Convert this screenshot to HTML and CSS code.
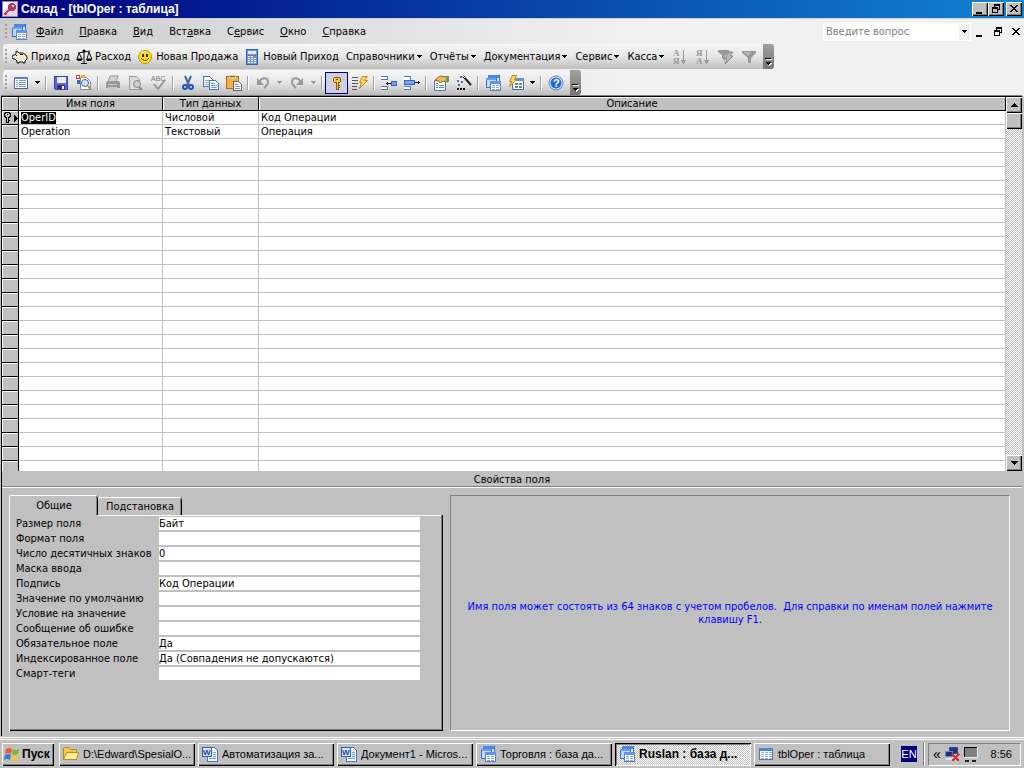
FILE: index.html
```html
<!DOCTYPE html>
<html lang="ru">

<head>
  <meta charset="UTF-8">
  <meta name="viewport" content="width=device-width, initial-scale=1.0">
  <title>Склад - [tblOper : таблица]</title>
  <link rel="stylesheet" href="styles.css">
</head>

<body>
  <!-- icons used more than once -->
  <svg class="sprite" aria-hidden="true">
    <symbol id="caret" viewBox="0 0 5 3"><path d="M0 0h5v1H4v1H3v1H2V2H1V1H0z" /></symbol>
    <symbol id="minimize" viewBox="0 0 10 10"><path d="M1 8h6v2H1z" /></symbol>
    <symbol id="restore" viewBox="0 0 10 10"><path d="M3 0h6v6H7V5h1V2H4v1H3zM1 3h6v6H1zM2 5v3h4V5z" fill-rule="evenodd" /></symbol>
    <symbol id="close" viewBox="0 0 10 10"><path d="M1 1h2v1h1v1h2V2h1V1h2v1H8v1H7v1H6v1h1v1h1v1h1v1H7V7H6V6H4v1H3v1H1V7h1V6h1V5h1V4H3V3H2V2H1z" /></symbol>
    <symbol id="more" viewBox="0 0 7 8">
      <path d="M1 1h6v1H1zM2 5h5v1H6v1H5v1H4V7H3V6H2z" fill="#fff" />
      <path d="M0 0h6v1H0zM1 4h5v1H5v1H4v1H3V6H2V5H1z" fill="#000" />
    </symbol>
    <symbol id="windows" viewBox="0 0 16 16">
      <path d="M3 0h11v10H3z" fill="#dce9fb" stroke="#3a6ccc" /><path d="M3 0h11v3H3z" fill="#4b86e8" />
      <path d="M1 3h10v9H1z" fill="#c5d9f7" stroke="#3a6ccc" /><path d="M1 3h10v2H1z" fill="#6a9df0" />
      <path d="M5.500 6.500h10v9h-10z" fill="#fff" stroke="#5b7fc0" /><path d="M5 6h11v3H5z" fill="#5f93ea" />
      <path d="M7 10h3v1H7zm4 0h3v1h-3zM7 12h3v1H7zm4 0h3v1h-3zM7 14h3v1H7zm4 0h3v1h-3z" fill="#86a7dd" />
    </symbol>
    <symbol id="word" viewBox="0 0 16 16">
      <path d="M5.500 1.500h7l3 3v11h-10z" fill="#f4f8ff" stroke="#4a74bd" />
      <path d="M11 6h3v1h-3zm0 2h3v1h-3zm0 2h3v1h-3zm-4 2h7v1H7z" fill="#7499d8" />
      <path d="M0 1h10v10H0z" fill="#2c5fba" /><path d="M1 2h8v8H1z" fill="#d9e6fb" />
      <text x="1" y="9" font-family="Liberation Sans" font-size="8" font-weight="bold" fill="#14459f">W</text>
    </symbol>
    <symbol id="datasheet" viewBox="0 0 16 16">
      <path d="M1.500 2.500h13v11h-13z" fill="#fff" stroke="#5675b0" /><path d="M1 2h14v3H1z" fill="#4c83de" />
      <path d="M3 6h3v1H3zm4 0h3v1H7zm4 0h3v1h-3zM3 8h3v1H3zm4 0h3v1H7zm4 0h3v1h-3zM3 10h3v1H3zm4 0h3v1H7zm4 0h3v1h-3zM3 12h3v1H3zm4 0h3v1H7zm4 0h3v1h-3z" fill="#8fb2e8" />
    </symbol>
  </svg>

  <header class="title-bar">
    <svg class="icon" viewBox="0 0 16 16"><path d="M.5.5h15v15H.5z" fill="#fff" stroke="#9b8aa0" /><path d="M1 11l10-10h4v14H1z" fill="#ead6e0" /><path d="M7 7L2 12v2h2l1-1 1-2 3-2z" fill="#b54867" /><circle cx="10" cy="6" r="4" fill="#b13c60" /><circle cx="11" cy="5" r="1" fill="#f6dbe5" /></svg>
    <h1>Склад - [tblOper : таблица]</h1>
    <div class="window-buttons">
      <button aria-label="Свернуть"><svg><use href="#minimize" /></svg></button>
      <button aria-label="Восстановить"><svg><use href="#restore" /></svg></button>
      <button class="close" aria-label="Закрыть"><svg><use href="#close" /></svg></button>
    </div>
  </header>

  <div class="bars">
    <nav class="menu-bar">
      <span class="grip"></span>
      <svg class="icon"><use href="#windows" /></svg>
      <button><u>Ф</u>айл</button>
      <button><u>П</u>равка</button>
      <button><u>В</u>ид</button>
      <button>Вст<u>а</u>вка</button>
      <button>С<u>е</u>рвис</button>
      <button><u>О</u>кно</button>
      <button><u>С</u>правка</button>
      <div class="ask">
        <input type="text" placeholder="Введите вопрос" aria-label="Введите вопрос">
        <button aria-label="Список вопросов"><svg class="caret"><use href="#caret" /></svg></button>
      </div>
      <div class="child-buttons">
        <button aria-label="Свернуть окно"><svg><use href="#minimize" /></svg></button>
        <button aria-label="Восстановить окно"><svg><use href="#restore" /></svg></button>
        <button aria-label="Закрыть окно"><svg><use href="#close" /></svg></button>
      </div>
    </nav>

    <div class="toolbar commands">
      <span class="grip"></span>
      <button>
        <svg class="icon smooth" viewBox="0 0 16 16"><path d="M1 6h2l1-1V2l2 1 1 1h4l3 2 1 2v2l-2 2v2h-2v-1H7v1H5v-2L3 10H1L0 8z" fill="#f4ead0" stroke="#111" /><path d="M4 6h1v1H4zM8 5h3v1H8z" fill="#111" /></svg>Приход</button>
      <button>
        <svg class="icon smooth" viewBox="0 0 16 16"><path d="M8 1v13M5 14.500h6M2 4l6-1 6-1M3 4L1 10h5L3 4M13 3l-2 7h5L13 3" fill="none" stroke="#111" /><path d="M0 10h7l-2 2H2zM10 10h6l-1 2h-4z" fill="#111" /><circle cx="8" cy="2" r="1.500" /></svg>Расход</button>
      <button>
        <svg class="icon smooth" viewBox="0 0 16 16"><circle cx="8" cy="8" r="6.500" fill="#ffdf18" stroke="#c59200" /><path d="M5 5h2v3H5zM9 5h2v3H9z" fill="#3b2c00" /><path d="M4 9q4 5 8 0" fill="none" stroke="#5b4300" /><path d="M4 4q2-2 5-1" stroke="#fffbd0" fill="none" /></svg>Новая Продажа</button>
      <button>
        <svg class="icon" viewBox="0 0 16 16"><path d="M2.500.5h11v15h-11z" fill="#6c98df" stroke="#3560aa" /><path d="M4 2h8v3H4z" fill="#d8f0fa" /><path d="M4 6h2v2H4zm3 0h2v2H7zM4 9h2v1H4zm3 0h2v1H7zM4 11h2v1H4zm3 0h2v1H7zm-3 2h2v1H4zm3 0h2v1H7zm3-4h2v1h-2zm0 2h2v1h-2zm0 2h2v1h-2z" fill="#fff" /><path d="M4 6h2v1H4zm3 0h2v1H7zm3 0h2v1h-2z" fill="#e33b35" /></svg>Новый Приход</button>
      <button class="drop">Справочники<svg class="caret"><use href="#caret" /></svg></button>
      <button class="drop">Отчёты<svg class="caret"><use href="#caret" /></svg></button>
      <button class="drop">Документация<svg class="caret"><use href="#caret" /></svg></button>
      <button class="drop">Сервис<svg class="caret"><use href="#caret" /></svg></button>
      <button class="drop">Касса<svg class="caret"><use href="#caret" /></svg></button>
      <button class="tool" disabled aria-label="Сортировка по возрастанию"><svg class="icon" viewBox="0 0 16 16"><text class="letter" x="1" y="7">А</text><text class="letter" x="1" y="15">Я</text><path d="M11 1h1v10h2l-2 4h-1l-2-4h2z" fill="#999" /></svg></button>
      <button class="tool" disabled aria-label="Сортировка по убыванию"><svg class="icon" viewBox="0 0 16 16"><text class="letter" x="1" y="7">Я</text><text class="letter" x="1" y="15">А</text><path d="M11 1h1v10h2l-2 4h-1l-2-4h2z" fill="#999" /></svg></button>
      <button class="tool" disabled aria-label="Фильтр по выделенному"><svg class="icon smooth" viewBox="0 0 16 16"><path d="M0 1h11v2L7 7v5l-3-3V6L0 3z" fill="#999" /><path d="M11 3h4l-3 4h3l-8 8 2-5H7z" fill="#bbb" stroke="#888" /></svg></button>
      <button class="tool" disabled aria-label="Применить фильтр"><svg class="icon smooth" viewBox="0 0 16 16"><path d="M1 2h14v2l-5 5v5H7V9L1 4z" fill="#999" /><path d="M3 3h7L7 7z" fill="#bbb" /></svg></button>
      <button class="more" aria-label="Параметры панелей"><svg><use href="#more" /></svg></button>
    </div>

    <div class="toolbar">
      <span class="grip"></span>
      <button class="tool" aria-label="Вид"><svg class="icon" viewBox="0 0 16 16"><path d="M1.500 2.500h13v11h-13z" fill="#fff" stroke="#4a6696" /><path d="M1 2h14v2H1z" fill="#5b82c4" /><path d="M3 5h2v1H3zm0 2h2v1H3zm0 2h2v1H3zm0 2h2v1H3zm3-6h7v1H6zm0 2h7v1H6zm0 2h7v1H6zm0 2h7v1H6z" fill="#7d9bc9" /></svg></button>
      <button class="tool-drop" aria-label="Список видов"><svg class="caret"><use href="#caret" /></svg></button>
      <span class="separator"></span>
      <button class="tool" aria-label="Сохранить"><svg class="icon" viewBox="0 0 16 16"><path d="M1.500 1.500h13v13h-12l-1-1z" fill="#6468d4" stroke="#3a3ea8" /><path d="M4 2h9v6H4z" fill="#e8edfb" /><path d="M4 10h8v4H4z" fill="#2d3284" /><path d="M9 11h2v3H9z" fill="#fff" /></svg></button>
      <button class="tool" aria-label="Поиск файлов"><svg class="icon smooth" viewBox="0 0 16 16"><path d="M4.500 2.500h6l4 4v8h-10z" fill="#fff" stroke="#6f8db9" /><path d="M0 0h4v4H0z" fill="#d93a27" /><path d="M1 1h2v2H1z" fill="#fff" /><path d="M5 0h4v3H5z" fill="#f0ae25" /><path d="M1 5h3v4H1z" fill="#3a68c9" /><circle cx="9" cy="8" r="3.500" fill="#c5e6fb" stroke="#5a6575" /><path d="M12 11l3 4" stroke="#c68734" stroke-width="2" /></svg></button>
      <span class="separator"></span>
      <button class="tool" disabled aria-label="Печать"><svg class="icon smooth" viewBox="0 0 16 16"><path d="M5 1h8l-2 6H3z" fill="#d5d5d5" stroke="#999" /><path d="M2 6h12l1 2v5H1V8z" fill="#999" /><path d="M3 9h9v1H3zM3 12h9v3H3z" fill="#c8c8c8" /></svg></button>
      <button class="tool" disabled aria-label="Предварительный просмотр"><svg class="icon smooth" viewBox="0 0 16 16"><path d="M1.500 1.500h7l3 3v10h-10z" fill="#ddd" stroke="#999" /><circle cx="9" cy="9" r="3.500" fill="#ccc" stroke="#888" /><path d="M11 12l3 3" stroke="#888" stroke-width="2" /></svg></button>
      <button class="tool" disabled aria-label="Орфография"><svg class="icon smooth" viewBox="0 0 16 16"><text x="0" y="6" font-family="Liberation Sans" font-size="7" fill="#777">ABC</text><path d="M3 9l4 5 7-9" fill="none" stroke="#999" stroke-width="2" /></svg></button>
      <span class="separator"></span>
      <button class="tool" aria-label="Вырезать"><svg class="icon smooth" viewBox="0 0 16 16"><path d="M5 1l4 9M11 1L7 10" stroke="#4b6490" stroke-width="2" /><circle cx="5" cy="12" r="2" fill="none" stroke="#2453b4" stroke-width="2" /><circle cx="11" cy="12" r="2" fill="none" stroke="#2453b4" stroke-width="2" /></svg></button>
      <button class="tool" aria-label="Копировать"><svg class="icon" viewBox="0 0 16 16"><path d="M.5 1.500h6l3 3v7h-9z" fill="#fff" stroke="#4372c7" /><path d="M2 5h5v1H2zm0 2h5v1H2zm0 2h5v1H2z" fill="#86aae6" /><path d="M6.500 5.500h6l3 3v6h-9z" fill="#fff" stroke="#4372c7" /><path d="M8 8h4v1H8zm0 2h6v1H8zm0 2h6v1H8z" fill="#6f98dc" /></svg></button>
      <button class="tool" aria-label="Вставить"><svg class="icon" viewBox="0 0 16 16"><path d="M.5 1.500h12v12H.5z" fill="#f0b43c" stroke="#a86f15" /><path d="M3 0h7v4H3z" fill="#d9c89f" /><path d="M4 1h5v1H4z" fill="#7a674a" /><path d="M7.500 6.500h5l3 3v6h-8z" fill="#fff" stroke="#53617c" /><path d="M9 9h3v1H9zm0 2h5v1H9zm0 2h5v1H9z" fill="#7d95bf" /></svg></button>
      <span class="separator"></span>
      <button class="tool" disabled aria-label="Отменить"><svg class="icon smooth" viewBox="0 0 16 16"><path d="M4 7c3-5 9-5 9 0 0 3-2 4-4 6" fill="none" stroke="#999" stroke-width="2" /><path d="M2 3v7h7z" fill="#999" /></svg></button>
      <button class="tool-drop" disabled aria-label="Список отмены"><svg class="caret"><use href="#caret" /></svg></button>
      <button class="tool" disabled aria-label="Вернуть"><svg class="icon smooth" viewBox="0 0 16 16"><path d="M12 7C9 2 3 2 3 7c0 3 2 4 4 6" fill="none" stroke="#999" stroke-width="2" /><path d="M14 3v7H7z" fill="#999" /></svg></button>
      <button class="tool-drop" disabled aria-label="Список возврата"><svg class="caret"><use href="#caret" /></svg></button>
      <span class="separator"></span>
      <button class="tool pressed" aria-label="Ключевое поле"><svg class="icon" viewBox="0 0 16 16"><path d="M5 2h6v1h1v4h-1v1h-1v7H7V8H5V7H4V3h1z" fill="#7b5c14" /><path d="M5 3h6v4H9v7H8V7H5z" fill="#f5cd3d" /><path d="M7 4h2v1H7zM10 10h1v1h-1zM10 12h1v1h-1z" fill="#6f520f" /></svg></button>
      <button class="tool" aria-label="Индексы"><svg class="icon smooth" viewBox="0 0 16 16"><path d="M0 2h6v1H0zm0 3h6v1H0zm0 3h6v1H0zm0 3h5v1H0zm0 3h5v1H0z" fill="#555" /><path d="M10.500 1.500h5l-3 4h3l-8 8 2-6h-2z" fill="#ffdb55" stroke="#c28519" /></svg></button>
      <span class="separator"></span>
      <button class="tool" aria-label="Добавить строки"><svg class="icon" viewBox="0 0 16 16"><path d="M0 1h6v4H0zM0 11h6v4H0z" fill="#fff" /><path d="M0 1h6v1H0zM0 4h7v1H0zM0 11h6v1H0zM0 14h7v1H0zM6 1h1v4H6zM6 11h1v4H6z" fill="#5475aa" /><path d="M10.500 6.500h5v4h-5z" fill="#78a4ef" stroke="#3763b4" /><path d="M5 8h5v1H5zM6 7h1v3H6z" fill="#111" /></svg></button>
      <button class="tool" aria-label="Удалить строки"><svg class="icon" viewBox="0 0 16 16"><path d="M0 1h6v4H0zM0 11h6v4H0z" fill="#fff" /><path d="M0 1h6v1H0zM0 11h6v1H0zM0 14h7v1H0zM6 1h1v4H6zM6 11h1v4H6z" fill="#5475aa" /><path d="M.5 5.500h10v4H.5z" fill="#78a4ef" stroke="#3763b4" /><path d="M11 7h5v1h-5zM14 6h1v3h-1z" fill="#111" /></svg></button>
      <span class="separator"></span>
      <button class="tool" aria-label="Свойства"><svg class="icon smooth" viewBox="0 0 16 16"><path d="M1.500 5.500h11v10h-11z" fill="#fff" stroke="#58779f" /><path d="M3 8h2v1H3zm0 2h2v1H3zm0 2h2v1H3zm3-2h5v1H6zm0 2h5v1H6z" fill="#5f87c4" /><path d="M2 5l5-4 8 1v5l-5-1-3 2-1-2z" fill="#edbc55" stroke="#966c28" /><path d="M13 1h3v6h-3z" fill="#6b9a52" /></svg></button>
      <button class="tool" aria-label="Построить"><svg class="icon smooth" viewBox="0 0 16 16"><path d="M7 1l8 9" stroke="#222" stroke-width="2" /><path d="M7 1l2 2" stroke="#fff" /><path d="M4 1h2v2H4zM1 5h2v2H1zM5 6h2v2H5zM2 9h2v2H2z" fill="#5963c9" /><path d="M1 13h2v2H1zm3 0h2v2H4zm3 0h2v2H7z" /></svg></button>
      <span class="separator"></span>
      <button class="tool" aria-label="Окно базы данных"><svg class="icon"><use href="#windows" /></svg></button>
      <button class="tool" aria-label="Новый объект"><svg class="icon smooth" viewBox="0 0 16 16"><path d="M4.500 3.500h11v11h-11z" fill="#fff" stroke="#416eb8" /><path d="M5 3h11v3H5z" fill="#5f93ea" /><path d="M7 8h3v2H7zm4 0h3v2h-3zm-4 3h3v2H7zm4 0h3v2h-3z" fill="#71809b" /><path d="M4.500.5h4l-2 4h2l-7 7 2-5h-2z" fill="#ffdb55" stroke="#c28519" /></svg></button>
      <button class="tool-drop" aria-label="Список объектов"><svg class="caret"><use href="#caret" /></svg></button>
      <span class="separator"></span>
      <button class="tool" aria-label="Справка"><svg class="icon smooth" viewBox="0 0 16 16"><circle cx="8" cy="8" r="7" fill="#e4efff" stroke="#5481cb" /><circle cx="8" cy="8" r="5.500" fill="#2867d8" /><text x="5" y="12" font-family="Liberation Sans" font-size="11" font-weight="bold" fill="#fff">?</text></svg></button>
      <button class="more" aria-label="Параметры панелей"><svg><use href="#more" /></svg></button>
    </div>
  </div>

  <main class="designer">
    <section class="fields">
      <div class="fields-view">
        <table>
          <thead>
            <tr><th class="selector"></th><th class="name">Имя поля</th><th class="type">Тип данных</th><th>Описание</th></tr>
          </thead>
          <tbody>
            <tr>
              <th class="selector"><svg class="current" viewBox="0 0 16 12"><path d="M3.500.5h4v1h1v3h-1v1h-1v5h-2v-5h-1v-1h-1v-3h1zM6.500 8.500h1" fill="none" stroke="#000" /><path d="M5 2h1v1H5z" /><path d="M12 3h1v1h1v1h1v1h1v1h-1v1h-1v1h-1v1h-1z" /></svg></th>
              <td><mark>OperID</mark></td><td>Числовой</td><td>Код Операции</td>
            </tr>
            <tr><th class="selector"></th><td>Operation</td><td>Текстовый</td><td>Операция</td></tr>
            <tr><th class="selector"></th><td></td><td></td><td></td></tr>
            <tr><th class="selector"></th><td></td><td></td><td></td></tr>
            <tr><th class="selector"></th><td></td><td></td><td></td></tr>
            <tr><th class="selector"></th><td></td><td></td><td></td></tr>
            <tr><th class="selector"></th><td></td><td></td><td></td></tr>
            <tr><th class="selector"></th><td></td><td></td><td></td></tr>
            <tr><th class="selector"></th><td></td><td></td><td></td></tr>
            <tr><th class="selector"></th><td></td><td></td><td></td></tr>
            <tr><th class="selector"></th><td></td><td></td><td></td></tr>
            <tr><th class="selector"></th><td></td><td></td><td></td></tr>
            <tr><th class="selector"></th><td></td><td></td><td></td></tr>
            <tr><th class="selector"></th><td></td><td></td><td></td></tr>
            <tr><th class="selector"></th><td></td><td></td><td></td></tr>
            <tr><th class="selector"></th><td></td><td></td><td></td></tr>
            <tr><th class="selector"></th><td></td><td></td><td></td></tr>
            <tr><th class="selector"></th><td></td><td></td><td></td></tr>
            <tr><th class="selector"></th><td></td><td></td><td></td></tr>
            <tr><th class="selector"></th><td></td><td></td><td></td></tr>
            <tr><th class="selector"></th><td></td><td></td><td></td></tr>
            <tr><th class="selector"></th><td></td><td></td><td></td></tr>
            <tr><th class="selector"></th><td></td><td></td><td></td></tr>
            <tr><th class="selector"></th><td></td><td></td><td></td></tr>
            <tr><th class="selector"></th><td></td><td></td><td></td></tr>
            <tr><th class="selector"></th><td></td><td></td><td></td></tr>
          </tbody>
        </table>
      </div>
      <div class="scrollbar">
        <button aria-label="Вверх"><svg viewBox="0 0 7 4"><path d="M3 0h1v1h1v1h1v1h1v1H0V3h1V2h1V1h1z" /></svg></button>
        <div class="thumb"></div>
        <button class="down" aria-label="Вниз"><svg viewBox="0 0 7 4"><path d="M0 0h7v1H6v1H5v1H4v1H3V3H2V2H1V1H0z" /></svg></button>
      </div>
    </section>

    <h2>Свойства поля</h2>

    <section class="properties">
      <div class="tab-control">
        <div class="tabs">
          <button class="active">Общие</button>
          <button>Подстановка</button>
        </div>
        <form class="tab-page">
          <label for="size">Размер поля</label><input id="size" type="text" value="Байт">
          <label for="format">Формат поля</label><input id="format" type="text">
          <label for="decimals">Число десятичных знаков</label><input id="decimals" type="text" value="0">
          <label for="mask">Маска ввода</label><input id="mask" type="text">
          <label for="caption">Подпись</label><input id="caption" type="text" value="Код Операции">
          <label for="default">Значение по умолчанию</label><input id="default" type="text">
          <label for="rule">Условие на значение</label><input id="rule" type="text">
          <label for="error">Сообщение об ошибке</label><input id="error" type="text">
          <label for="required">Обязательное поле</label><input id="required" type="text" value="Да">
          <label for="indexed">Индексированное поле</label><input id="indexed" type="text" value="Да (Совпадения не допускаются)">
          <label for="smart">Смарт-теги</label><input id="smart" type="text">
        </form>
      </div>
      <div class="hint">
        <p>Имя поля может состоять из 64 знаков с учетом пробелов.&nbsp; Для справки по именам полей нажмите клавишу F1.</p>
      </div>
    </section>
  </main>

  <footer class="taskbar">
    <button class="start">
      <svg class="icon smooth" viewBox="0 0 16 16"><path d="M2 3q3-2 6 0L7 8Q4 6 1 8z" fill="#ee5a2b" /><path d="M9 3q3 2 6 0l-1 5q-3 2-6 0z" fill="#72b83a" /><path d="M1 9q3-2 6 0l-1 5q-3-2-6 0z" fill="#3c77df" /><path d="M8 9q3 2 6 0l-1 5q-3 2-6 0z" fill="#f7c52c" /></svg>Пуск</button>
    <div class="tasks">
      <button><svg class="icon smooth" viewBox="0 0 16 16"><path d="M.5 13.500v-11l1-1h4l2 2h6v3" fill="#f2c94e" stroke="#b98a1c" /><path d="M.5 13.500l3-7h12l-2 7z" fill="#ffeb95" stroke="#b98a1c" /></svg><span>D:\Edward\SpesialO...</span></button>
      <button><svg class="icon"><use href="#word" /></svg><span>Автоматизация за...</span></button>
      <button><svg class="icon"><use href="#word" /></svg><span>Документ1 - Micros...</span></button>
      <button><svg class="icon"><use href="#windows" /></svg><span>Торговля : база да...</span></button>
      <button class="active"><svg class="icon"><use href="#windows" /></svg><span>Ruslan : база д...</span></button>
      <button><svg class="icon"><use href="#datasheet" /></svg><span>tblOper : таблица</span></button>
    </div>
    <button class="language">EN</button>
    <div class="tray">
      <button aria-label="Показать скрытые значки">«</button>
      <svg class="icon" viewBox="0 0 16 16"><path d="M5 1h9v7H5z" fill="#3b4c93" /><path d="M6 2h7v5H6z" fill="#23357b" /><path d="M1 5h8v6H1z" fill="#6c82c9" /><path d="M2 6h6v4H2z" fill="#1d2f78" /><path d="M2 12h7v2H2z" fill="#dfe3f0" /><path d="M8 8l7 7M15 8l-7 7" stroke="#e0302c" stroke-width="2" /></svg>
      <svg class="icon" viewBox="0 0 16 16"><path d="M1 1h13v10H1z" fill="#808080" /><path d="M1 1h13v1H2v9H1z" fill="#000" /><path d="M14 1h1v11H1v-1h13z" fill="#eee" /><path d="M2 14h4v2H2zM9 14h4v2H9z" fill="#222" /></svg>
      <time>8:56</time>
    </div>
  </footer>
</body>

</html>
```
FILE: styles.css
```css
* {
  box-sizing: border-box;
}

body {
  display: flex;
  flex-direction: column;
  height: 100vh;
  margin: 0;
  background: #c0c0c0;
  color: #000;
  font-family: "DejaVu Sans Condensed", "Open Sans", sans-serif;
  font-size: 11px;
  line-height: 13px;
  cursor: default;
}

button,
input {
  margin: 0;
  padding: 0;
  border: none;
  border-radius: 0;
  background: none;
  color: inherit;
  font: inherit;
}

button {
  display: flex;
  align-items: center;
  white-space: nowrap;
}

svg {
  display: block;
  flex: none;
  shape-rendering: crispEdges;
}

.sprite {
  display: none;
}

.icon {
  width: 16px;
  height: 16px;
}

.smooth {
  shape-rendering: auto;
}

.caret {
  width: 5px;
  height: 3px;
  fill: currentColor;
}

/* title bar */
.title-bar {
  display: flex;
  align-items: center;
  height: 18px;
  flex: none;
  padding: 0 2px;
  background: linear-gradient(to right, #000080, #1084d0);
  color: #fff;
}

.title-bar h1 {
  flex: 1;
  margin: 0 3px;
  font-family: "Liberation Sans", sans-serif;
  font-size: 12px;
  font-weight: bold;
}

.window-buttons {
  display: flex;
}

.window-buttons button {
  justify-content: center;
  width: 16px;
  height: 14px;
  background: #c0c0c0;
  color: #000;
}

.window-buttons button,
.scrollbar button,
.thumb {
  box-shadow: inset 1px 1px #fff, inset -1px -1px #000, inset -2px -2px #808080;
}

.window-buttons .close {
  margin-left: 2px;
}

.window-buttons svg,
.child-buttons svg {
  width: 10px;
  height: 10px;
}

/* menu and toolbars */
.bars {
  display: flex;
  flex-direction: column;
  align-items: flex-start;
  gap: 1px;
  flex: none;
  padding: 1px 3px;
  border-top: 1px solid #d4d0c8;
  background: linear-gradient(to right, #cbcbcb, #f1f1f1 62%);
}

.menu-bar {
  display: flex;
  align-items: center;
  align-self: stretch;
  height: 23px;
}

.menu-bar > .icon {
  margin: 0 9px 0 2px;
}

.menu-bar > button {
  margin-right: 16px;
}

.grip {
  width: 2px;
  height: 16px;
  margin: 0 2px;
  background: repeating-linear-gradient(to bottom, #a0a0a0 0 2px, transparent 2px 4px);
}

.ask {
  display: flex;
  width: 148px;
  height: 18px;
  margin-left: auto;
  padding: 1px;
  background: #fff;
}

.ask input {
  flex: 1;
  min-width: 0;
  padding-left: 2px;
}

.ask input::placeholder {
  color: #808080;
  opacity: 1;
}

.ask button {
  justify-content: center;
  width: 11px;
  background: #f1f1f1;
}

.child-buttons {
  display: flex;
  gap: 8px;
  margin-left: 4px;
}

.toolbar {
  display: flex;
  align-items: center;
  height: 25px;
  border-radius: 3px;
  background: linear-gradient(to bottom, #f6f6f6, #e6e6e6 50%, #bdbdbd);
}

.commands button {
  gap: 3px;
  padding: 0 3px;
}

.commands .drop {
  gap: 2px;
  padding: 0 4px;
}

.tool,
.commands .tool {
  justify-content: center;
  width: 23px;
  height: 22px;
  padding: 0;
}

.tool-drop {
  justify-content: center;
  width: 11px;
  height: 22px;
}

.tool-drop:disabled {
  color: #999;
}

.tool.pressed {
  border: 1px solid #000080;
  background: #cfcfe0;
}

.separator {
  width: 6px;
  height: 14px;
  border-left: 2px solid transparent;
  background: linear-gradient(to right, #a0a0a0 1px, #fff 1px 2px, transparent 2px);
}

.letter {
  font-family: "Liberation Serif", serif;
  font-size: 9px;
  font-weight: bold;
  fill: #999;
}

.toolbar .more {
  align-items: flex-end;
  justify-content: center;
  width: 11px;
  height: 25px;
  margin-left: 3px;
  padding: 0 0 3px;
  border-radius: 0 3px 3px 0;
  background: linear-gradient(to bottom, #a0a0a0, #757575);
}

.more svg {
  width: 7px;
  height: 8px;
}

/* table designer */
.designer {
  display: flex;
  flex-direction: column;
  flex: 1;
  min-height: 0;
  margin: 0 2px 1px 1px;
  border-top: 1px solid #000;
  border-left: 1px solid #000;
  box-shadow: 0 -1px #808080;
}

.fields {
  display: flex;
  flex: 1;
  min-height: 0;
}

.fields-view {
  flex: 1;
  overflow: hidden;
  background: #fff;
}

.fields table {
  width: 100%;
  table-layout: fixed;
  border-collapse: separate;
  border-spacing: 0;
}

.fields th,
.fields td {
  height: 14px;
  padding: 1px 2px 0;
  line-height: 12px;
  font-weight: normal;
  text-align: left;
  white-space: nowrap;
  border-right: 1px solid #c0c0c0;
  border-bottom: 1px solid #c0c0c0;
}

.fields th {
  padding: 1px 0 0;
  background: #c0c0c0;
  border-color: #000;
  box-shadow: inset 1px 1px #fff;
  text-align: center;
}

.fields .selector {
  width: 17px;
}

.fields .name {
  width: 144px;
}

.fields .type {
  width: 96px;
}

.current {
  width: 16px;
  height: 12px;
}

mark {
  display: block;
  width: fit-content;
  background: #000;
  color: #fff;
}

.scrollbar {
  display: flex;
  flex-direction: column;
  width: 16px;
  background: repeating-conic-gradient(#fff 0 25%, #c0c0c0 0 50%) 0 0 / 2px 2px;
}

.scrollbar button,
.thumb {
  justify-content: center;
  height: 16px;
  background: #c0c0c0;
}

.scrollbar svg {
  width: 7px;
  height: 4px;
}

.scrollbar .down {
  margin-top: auto;
}

.designer h2 {
  flex: none;
  margin: 0;
  padding: 2px 0 0;
  height: 16px;
  border-bottom: 1px solid #808080;
  font-size: 11px;
  font-weight: normal;
  line-height: 13px;
  text-align: center;
}

/* field properties */
.properties {
  display: flex;
  gap: 7px;
  flex: none;
  padding: 7px 12px 5px 7px;
  border-top: 1px solid #fff;
}

.tab-control {
  display: flex;
  flex-direction: column;
  flex: 435 1 0;
}

.tabs {
  display: flex;
  align-items: flex-end;
}

.tabs button {
  justify-content: center;
  width: 84px;
  height: 18px;
  border-radius: 2px 2px 0 0;
  box-shadow: inset 0 1px #fff, inset -1px 0 #000, inset -2px 0 #808080;
}

.tabs .active {
  width: 89px;
  height: 20px;
  border-left: 1px solid #fff;
}

.tab-page {
  display: grid;
  grid-template-columns: 143px 1fr;
  align-content: start;
  gap: 2px 0;
  height: 216px;
  padding: 2px 23px 2px 7px;
  box-shadow: inset 1px 0 #fff, inset -1px -1px #000, inset -2px -2px #808080;
  background: linear-gradient(#fff, #fff) 89px 0 / 100% 1px no-repeat;
}

.tab-page input {
  width: 100%;
  height: 13px;
  background: #fff;
}

.hint {
  display: flex;
  align-items: center;
  justify-content: center;
  flex: 559 1 0;
  border: 1px solid;
  border-color: #808080 #fff #fff #808080;
}

.hint p {
  margin: 0;
  padding: 0 12px;
  color: #0000ff;
  text-align: center;
}

/* taskbar */
.taskbar {
  display: flex;
  align-items: center;
  flex: none;
  height: 31px;
  padding: 2px 3px 0 2px;
  border-top: 1px solid #fff;
  box-shadow: inset 0 1px #c0c0c0, inset 0 2px #fff;
  font-family: "Liberation Sans", sans-serif;
}

.taskbar > .start,
.tasks button {
  height: 23px;
  gap: 3px;
  padding: 0 3px;
  box-shadow: inset 1px 1px #fff, inset -1px -1px #000, inset -2px -2px #808080;
}

.taskbar > .start {
  width: 52px;
  padding: 0 2px;
  gap: 2px;
  font-size: 12px;
  font-weight: bold;
}

.tasks {
  display: flex;
  flex: 1;
  gap: 3px;
  min-width: 0;
  margin-left: 5px;
}

.tasks button {
  flex: 0 1 136px;
  min-width: 0;
  gap: 4px;
  padding: 0 4px;
}

.tasks span {
  overflow: hidden;
}

.tasks .active {
  background: repeating-conic-gradient(#fff 0 25%, #c0c0c0 0 50%) 0 0 / 2px 2px;
  box-shadow: inset 1px 1px #000, inset -1px -1px #fff, inset 2px 2px #808080;
  font-size: 12px;
  font-weight: bold;
}

.language {
  justify-content: center;
  width: 16px;
  height: 16px;
  margin-right: 7px;
  background: #000080;
  color: #fff;
}

.tray {
  display: flex;
  align-items: center;
  gap: 3px;
  width: 93px;
  height: 23px;
  margin-left: 4px;
  padding: 0 4px;
  border: 1px solid;
  border-color: #808080 #fff #fff #808080;
  box-shadow: -3px 0 #c0c0c0, -4px 0 #fff, -5px 0 #808080;
}

.tray button {
  font-size: 14px;
}

.tray time {
  margin-left: auto;
  padding-right: 4px;
}
```
